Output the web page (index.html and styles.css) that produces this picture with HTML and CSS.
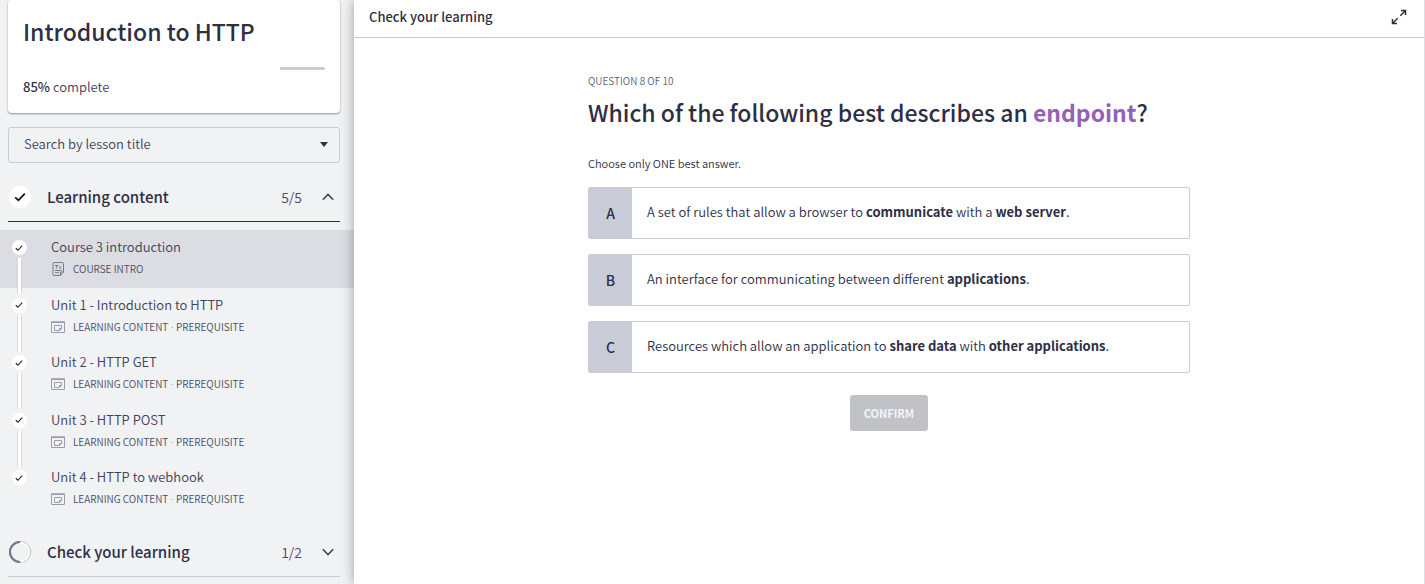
FILE: index.html
```html
<!DOCTYPE html>
<html lang="en">
<head>
<meta charset="utf-8">
<title>Introduction to HTTP</title>
<link rel="stylesheet" href="styles.css">
</head>
<body>
<svg class="sprite" aria-hidden="true">
  <symbol id="tick" viewBox="0 0 12 12"><path d="M1.2 6.4 4.4 9.4 10.8 2.6" fill="none" stroke="currentColor" stroke-width="1.7"/></symbol>
  <symbol id="chevron" viewBox="0 0 12 8"><path d="M.8 6.8 6 1.4l5.200 5.400" fill="none" stroke="currentColor" stroke-width="1.500"/></symbol>
  <symbol id="text-page" viewBox="0 0 14 16"><path d="M3 1.500h8.500a1 1 0 0 1 1 1V11L9.500 14.500H3a1 1 0 0 1-1-1v-11a1 1 0 0 1 1-1zM9.500 14.500V11h3M4 4.500h3.500M5.700 4.500v3M8.200 5.500l2.200 2.200M10.400 5.500 8.200 7.700M4 9.500h6.500M4 11.700h4" fill="none" stroke="currentColor"/></symbol>
  <symbol id="lesson" viewBox="0 0 14 12"><path d="M.5 1h13v10.500H.5z" fill="none" stroke="currentColor"/><path d="M3.500 4.500h7v3L8.500 9.500h-5zM8.500 9.500v-2h2" fill="none" stroke="currentColor"/><path d="M0 .5h14V2H0z" fill="currentColor"/></symbol>
</svg>
<div class="page">
  <aside class="sidebar">
    <header class="course">
      <h1 class="course-title">Introduction to HTTP</h1>
      <div class="progress" role="progressbar" aria-label="Course progress" aria-valuemin="0" aria-valuemax="100" aria-valuenow="85"><div class="progress-rest" style="width:15%"></div></div>
      <p class="course-status"><b>85%</b> complete</p>
    </header>
    <div class="search">
      <select class="search-select" aria-label="Search by lesson title"><option>Search by lesson title</option></select>
      <svg class="search-arrow" viewBox="0 0 8 5" aria-hidden="true"><path d="M0 0h8L4 5z" fill="currentColor"/></svg>
    </div>
    <button class="section section-open" type="button" aria-expanded="true">
      <span class="section-badge"><svg class="tick-large"><use href="#tick"/></svg></span>
      <span class="section-name">Learning content</span>
      <span class="section-count">5/5</span>
      <svg class="chevron"><use href="#chevron"/></svg>
    </button>
    <nav class="lessons">
      <a class="lesson lesson-active" href="#intro">
        <span class="rail"><span class="dot"><svg class="tick-small"><use href="#tick"/></svg></span></span>
        <span class="lesson-name">Course 3 introduction</span>
        <span class="lesson-meta"><svg class="icon-page"><use href="#text-page"/></svg>COURSE INTRO</span>
      </a>
      <a class="lesson" href="#unit1">
        <span class="rail"><span class="dot"><svg class="tick-small"><use href="#tick"/></svg></span></span>
        <span class="lesson-name">Unit 1 - Introduction to HTTP</span>
        <span class="lesson-meta"><svg class="icon-lesson"><use href="#lesson"/></svg><span>LEARNING CONTENT<span class="sep"> · </span>PREREQUISITE</span></span>
      </a>
      <a class="lesson" href="#unit2">
        <span class="rail"><span class="dot"><svg class="tick-small"><use href="#tick"/></svg></span></span>
        <span class="lesson-name">Unit 2 - HTTP GET</span>
        <span class="lesson-meta"><svg class="icon-lesson"><use href="#lesson"/></svg><span>LEARNING CONTENT<span class="sep"> · </span>PREREQUISITE</span></span>
      </a>
      <a class="lesson" href="#unit3">
        <span class="rail"><span class="dot"><svg class="tick-small"><use href="#tick"/></svg></span></span>
        <span class="lesson-name">Unit 3 - HTTP POST</span>
        <span class="lesson-meta"><svg class="icon-lesson"><use href="#lesson"/></svg><span>LEARNING CONTENT<span class="sep"> · </span>PREREQUISITE</span></span>
      </a>
      <a class="lesson" href="#unit4">
        <span class="rail"><span class="dot"><svg class="tick-small"><use href="#tick"/></svg></span></span>
        <span class="lesson-name">Unit 4 - HTTP to webhook</span>
        <span class="lesson-meta"><svg class="icon-lesson"><use href="#lesson"/></svg><span>LEARNING CONTENT<span class="sep"> · </span>PREREQUISITE</span></span>
      </a>
    </nav>
    <button class="section" type="button" aria-expanded="false">
      <svg class="ring" viewBox="0 0 22 22"><circle cx="11" cy="11" r="10.500" fill="none" stroke="#a9abb6"/><circle cx="11" cy="11" r="9.500" fill="none" stroke="#fff" stroke-width="1.500"/><path d="M11 21A10 10 0 0 1 11 1" fill="none" stroke="#707387" stroke-width="2"/></svg>
      <span class="section-name">Check your learning</span>
      <span class="section-count">1/2</span>
      <svg class="chevron chevron-down"><use href="#chevron"/></svg>
    </button>
  </aside>
  <main class="main">
    <header class="topbar">
      <h2 class="topbar-title">Check your learning</h2>
      <button class="expand" type="button" aria-label="Full screen"><svg class="expand-icon" viewBox="0 0 16 16"><path d="M9.300 6.700 14 2M10 1.500h4.500V6M6.700 9.300 2 14M1.500 10v4.500H6" fill="none" stroke="currentColor" stroke-width="1.500"/></svg></button>
    </header>
    <form class="quiz">
      <p class="quiz-step">QUESTION 8 OF 10</p>
      <h3 class="quiz-title">Which of the following best describes an <strong class="term">endpoint</strong>?</h3>
      <p class="quiz-hint">Choose only ONE best answer.</p>
      <div class="answers">
        <label class="answer"><input class="answer-input" type="radio" name="answer"><span class="answer-key">A</span><span class="answer-text">A set of rules that allow a browser to <b>communicate</b> with a <b>web server</b>.</span></label>
        <label class="answer"><input class="answer-input" type="radio" name="answer"><span class="answer-key">B</span><span class="answer-text">An interface for communicating between different <b>applications</b>.</span></label>
        <label class="answer"><input class="answer-input" type="radio" name="answer"><span class="answer-key">C</span><span class="answer-text">Resources which allow an application to <b>share data</b> with <b>other applications</b>.</span></label>
      </div>
      <button class="confirm" type="button" disabled>CONFIRM</button>
    </form>
  </main>
</div>
</body>
</html>
```
FILE: styles.css
```css
* { box-sizing: border-box; }
body {
  margin: 0;
  color: #2d2f45;
  font: 350 13px/20px "Noto Sans CJK SC", "Open Sans", sans-serif;
}
h1, h2, h3, p { margin: 0; }
b { font-weight: 700; }
button, select { font: inherit; color: inherit; }
.sprite { position: absolute; width: 0; height: 0; }
.page { display: grid; grid-template-columns: 354px 1fr; min-height: 100vh; }

.sidebar { background: #f1f2f4; color: #3f4157; }
.course {
  margin: 0 14px 14px 8px;
  padding: 14px 15px 16px;
  background: #fff;
  border-radius: 4px;
  box-shadow: 0 1px 2px #8b908f;
}
.course-title { font-size: 23px; line-height: 34px; font-weight: 500; color: #2d2f45; }
.progress { display: flex; justify-content: flex-end; margin: 19px 0 7px; }
.progress-rest { height: 3px; background: #c9cbd6; border-radius: 0 2px 2px 0; }
.course-status b { font-weight: 500; color: #2d2f45; }
.search { position: relative; margin: 0 14px 0 8px; }
.search-select {
  display: block;
  width: 100%;
  height: 36px;
  padding: 0 15px 2px;
  appearance: none;
  background: none;
  border: 1px solid #c9cbd6;
  border-radius: 3px;
}
.search-arrow { position: absolute; right: 12px; top: 15px; width: 8px; height: 5px; color: #2d2f45; }

.section {
  display: flex;
  align-items: center;
  width: calc(100% - 22px);
  height: 59px;
  margin: 0 14px 0 8px;
  padding: 9px 6px 0 1px;
  background: none;
  border: 0;
  border-bottom: 1px solid #c9cbd6;
  text-align: left;
}
.section-open { border-color: #2d2f45; }
.section-badge { display: grid; place-items: center; width: 22px; height: 22px; border-radius: 50%; background: #fff; color: #111; }
.tick-large { width: 12px; height: 12px; }
.ring { width: 22px; height: 22px; }
.section-name { flex: 1; margin-left: 16px; font-size: 15px; font-weight: 500; color: #2d2f45; }
.section-count { margin-right: 20px; font-size: 14px; color: #4a4c62; }
.chevron { width: 12px; height: 8px; color: #3f4157; }
.chevron-down { transform: rotate(180deg); }

.lessons { display: grid; grid-auto-rows: 1fr; min-height: 288px; margin-top: 8px; }
.lesson {
  display: grid;
  grid-template: 24px 20px / 51px 1fr;
  padding-top: 5px;
  color: #3f4157;
  text-decoration: none;
}
.lesson-active { background: #dcdde2; }
.rail { grid-row: 1 / 3; display: flex; flex-direction: column; align-items: center; width: 38px; padding-top: 5px; }
.dot { flex: none; display: grid; place-items: center; width: 15px; height: 15px; border-radius: 50%; background: #fff; color: #222; }
.tick-small { width: 8px; height: 8px; }
.rail::after {
  content: "";
  flex: none;
  width: 3px;
  height: 36px;
  margin-top: 3px;
  background: #fff;
  border: solid #d5d6dc;
  border-width: 0 1px;
  z-index: 1;
}
.lesson:last-child .rail::after { display: none; }
.lesson-name { line-height: 24px; }
.lesson-meta { display: flex; align-items: center; gap: 8px; font-size: 10px; color: #4a4c62; }
.sep { font-family: "Open Sans", sans-serif; }
.icon-page { width: 14px; height: 16px; color: #777a8c; }
.icon-lesson { width: 14px; height: 12px; color: #9a9cab; }

.main { background: #fff; border-right: 1px solid #dcdde2; box-shadow: 0 0 12px rgba(0, 0, 0, .35); }
.topbar {
  display: flex;
  align-items: center;
  justify-content: space-between;
  height: 38px;
  padding: 0 17px 4px 15px;
  border-bottom: 1px solid #c9cbd6;
}
.topbar-title { font-size: 13px; font-weight: 500; }
.expand { display: flex; padding: 0; background: none; border: 0; }
.expand-icon { width: 16px; height: 16px; }
.quiz { display: flex; flex-direction: column; max-width: 602px; margin: 0 auto; padding-top: 33px; }
.quiz-step { font-size: 10px; color: #5d5f6e; }
.quiz-title { margin-top: 4px; font-size: 23px; line-height: 34px; font-weight: 500; }
.term { color: #9362b8; font-weight: 700; }
.quiz-hint { margin: 24px 0 14px; font-size: 11px; color: #2d2f45; }
.answers { display: grid; gap: 15px; }
.answer { display: flex; min-height: 52px; border: 1px solid #c9cbd6; border-radius: 2px; }
.answer-input { position: absolute; margin: 0; width: 1px; height: 1px; opacity: 0; }
.answer-key { display: grid; place-items: center; width: 43px; background: #c9cbd6; font-size: 14px; font-weight: 500; }
.answer-text { padding: 14px 15px; }
.confirm {
  align-self: center;
  height: 36px;
  margin-top: 22px;
  padding: 0 14px;
  background: #c1c2c8;
  border: 0;
  border-radius: 3px;
  color: #f4f4f6;
  font-size: 11px;
  font-weight: 700;
}
```
